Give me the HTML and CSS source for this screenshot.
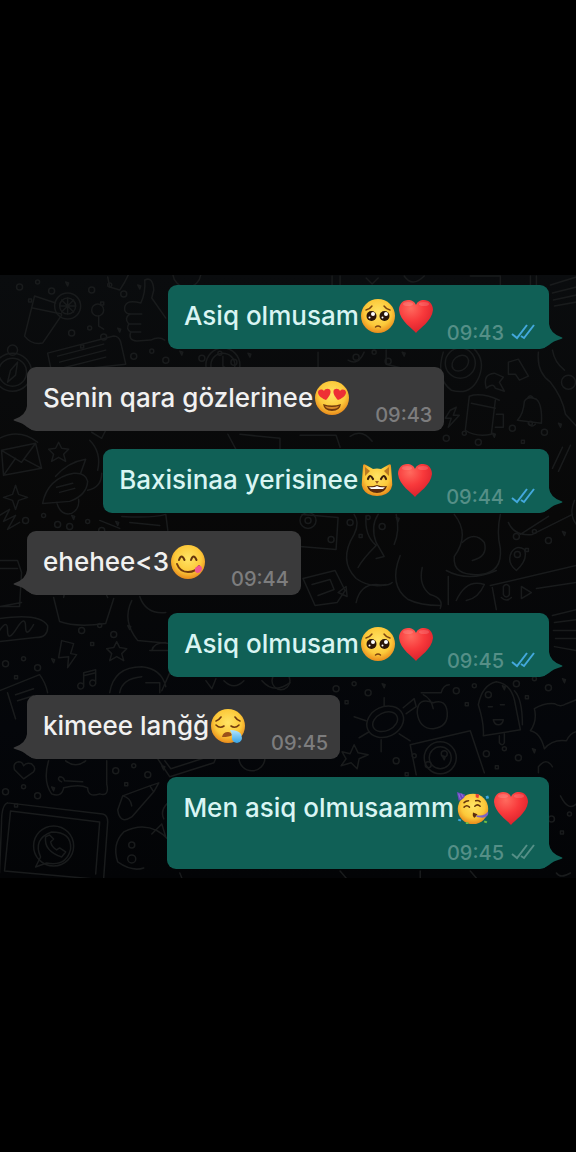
FILE: index.html
```html
<!DOCTYPE html>
<html lang="az">
<head>
    <meta charset="UTF-8">
    <meta name="viewport" content="width=device-width, initial-scale=1">
    <title>Chat</title>
    <link rel="stylesheet" href="styles.css">
</head>
<body>
    <!-- shared icons -->
    <svg class="sprite" aria-hidden="true">
        <defs>
            <radialGradient id="face" cx="50%" cy="40%" r="60%">
                <stop offset="0" stop-color="#ffe465"/>
                <stop offset=".65" stop-color="#fcc93a"/>
                <stop offset="1" stop-color="#e98b1c"/>
            </radialGradient>
            <radialGradient id="red" cx="35%" cy="25%" r="80%">
                <stop offset="0" stop-color="#ff6a5e"/>
                <stop offset=".5" stop-color="#f8393b"/>
                <stop offset="1" stop-color="#d81f2b"/>
            </radialGradient>
            <linearGradient id="drop" x1="0" y1="0" x2="0" y2="1">
                <stop offset="0" stop-color="#b4e6ff"/>
                <stop offset="1" stop-color="#35a3e6"/>
            </linearGradient>
        </defs>

        <symbol id="heart" viewBox="0 0 34 34">
            <path fill="url(#red)" d="M17 34C14 30 1 22 0 11C0 5 4 1 9 1c4 0 7 2 8 5c1-3 4-5 8-5c5 0 9 4 9 10c-1 11-14 19-17 23z"/>
            <ellipse cx="9" cy="5" rx="5" ry="2" fill="#fff" opacity=".15"/>
            <ellipse cx="25" cy="5" rx="5" ry="2" fill="#fff" opacity=".15"/>
        </symbol>

        <symbol id="pleading" viewBox="0 0 34 34">
            <circle cx="17" cy="17" r="17" fill="url(#face)"/>
            <g fill="#2a1508">
                <circle cx="10.500" cy="17" r="5"/>
                <circle cx="23.500" cy="17" r="5"/>
            </g>
            <g fill="#fff">
                <circle cx="12" cy="15" r="2"/>
                <circle cx="25" cy="15" r="2"/>
                <circle cx="8.500" cy="18.500" r="1"/>
                <circle cx="21.500" cy="18.500" r="1"/>
            </g>
            <path d="M5 11q4-1 6-4M29 11q-4-1-6-4M14.500 28q2.500-2 5 0" fill="none" stroke="#7a4310" stroke-width="1.400" stroke-linecap="round"/>
        </symbol>

        <symbol id="heart-eyes" viewBox="0 0 34 34">
            <circle cx="17" cy="17" r="17" fill="url(#face)"/>
            <path fill="#ee2f35" d="M11 19C8 18 3 15 3 11.500c0-3 4-4 6-1.500c1-3 6-3 6.500 0c.5 3-2.500 7-4.500 9zM23 19c3-1 8-4 8-7.500c0-3-4-4-6-1.500c-1-3-6-3-6.500 0c-.5 3 2.500 7 4.500 9z"/>
            <path fill="#71390e" d="M8 23q9 3 18 0q-1 7-9 7t-9-7z"/>
            <path fill="#d88a2a" d="M10 25q7 2 14 0q-1 3-7 3t-7-3z"/>
        </symbol>

        <symbol id="cat" viewBox="0 0 34 34">
            <path fill="url(#face)" d="M3 3q0-3 3-1l7 4q4-1 8 0l7-4q3-2 3 1l1 14q1 5-1 9q-4 7-14 7T3 26q-2-4-1-9z"/>
            <path fill="#b97822" d="M5 4l5 4l-5 5zM29 4l-5 4l5 5z"/>
            <path d="M8 16q2-6 5 0M21 16q3-6 5 0" fill="none" stroke="#3a1d0b" stroke-width="2.200" stroke-linecap="round"/>
            <path fill="#9b5a1a" d="M15 18h4l-2 3z"/>
            <path fill="#5a2a0d" d="M7 23q5 1 10-1q5 2 10 1q-2 7-10 7T7 23z"/>
            <path fill="#fff" d="M9 24q5 1 8-1q3 2 8 1l-2 2h-12z"/>
        </symbol>

        <symbol id="yum" viewBox="0 0 34 34">
            <circle cx="17" cy="17" r="17" fill="url(#face)"/>
            <path d="M8 15q2.500-7 5.500 0M20 15q2.500-7 5.500 0" fill="none" stroke="#65350d" stroke-width="2" stroke-linecap="round"/>
            <path d="M6 19q3 8 11 8q8 0 11-6" fill="none" stroke="#71390e" stroke-width="2" stroke-linecap="round"/>
            <path fill="#f0588f" d="M24 23l4-3q3 1 3 4q-1 4-5 4q-3-1-2-5z"/>
        </symbol>

        <symbol id="sleepy" viewBox="0 0 34 34">
            <circle cx="17" cy="17" r="17" fill="url(#face)"/>
            <path d="M5 16q4 4 8 1M20 17q4 3 8-1M5 12q3-1 5-4M29 12q-3-1-5-4" fill="none" stroke="#71390e" stroke-width="1.600" stroke-linecap="round"/>
            <path fill="#9b5119" d="M11 28q1-5 6-5q3 0 4 3q-2 2-10 2z"/>
            <path fill="url(#drop)" d="M19 21q8 0 11 4q3 8-4 9q-6-1-5-7q0-3-2-6z"/>
        </symbol>

        <symbol id="party" viewBox="0 0 36 38">
            <circle cx="18" cy="20" r="17" fill="url(#face)"/>
            <path fill="#6a48bd" d="M0 1l9 3q0 5-7 7z"/>
            <path d="M2 3l2 6M5 3l2 4" stroke="#9a76dd" stroke-width="1"/>
            <path d="M8 18q3-3 6 0M20 17q3-3 6 0M8 13q2-2 5-2M21 11q3-1 5 1" fill="none" stroke="#65350d" stroke-width="1.700" stroke-linecap="round"/>
            <path fill="#5a2a0d" d="M18 24l5 2l-3 4q-3-1-2-6z"/>
            <path d="M22 27q8 2 13-4q1 6-6 7l-7-1z" fill="#7b62c4"/>
            <path fill="#e64238" d="M21 3l4 1l-1 4l-3-1z"/>
            <path fill="#3da5de" d="M32 6l3-1l1 3l-3 1zM2 31l3 1l-1 2l-3-1z"/>
            <path fill="#6fbf45" d="M10 35h3v2h-3zM31 33l3 1l-1 2l-3-1z"/>
        </symbol>

        <symbol id="ticks" viewBox="0 0 24 18">
            <path d="M1 10l5 4L16 1M10 12l3 2L23 1" fill="none" stroke="currentColor" stroke-width="2"/>
        </symbol>

        <symbol id="tail" viewBox="0 0 20 24">
            <path fill="currentColor" d="M0 0H5Q6 9 17 13Q20 14 17 15Q9 17 5 21L0 24z"/>
        </symbol>
    </svg>

    <main class="chat">
        <!-- wallpaper doodles -->
        <svg class="wallpaper" viewBox="0 275 576 602" preserveAspectRatio="xMidYMin slice" aria-hidden="true">
            <defs>
                <g id="bits">
                    <circle cx="6" cy="8" r="3"/><circle cx="24" cy="3" r="2"/><circle cx="38" cy="12" r="3"/>
                    <path d="M52 3l3 1l-1 3zM15 20h3v3h-3z"/>
                </g>
                <path id="star" d="M0-10l3 6l7 1l-5 5l2 7l-7-4l-7 4l2-7l-5-5l7-1z"/>
                <path id="note" d="M-6 7V-7L6-10V4M-6 7a3 3 0 1 1-1-3M6 4a3 3 0 1 1-1-3M-6-4L6-7"/>
            </defs>

            <!-- scattered bits -->
            <use href="#bits" x="14" y="279"/><use href="#bits" x="86" y="282"/>
            <use href="#bits" x="66" y="325"/><use href="#bits" x="128" y="348"/>
            <use href="#bits" x="196" y="350"/><use href="#bits" x="350" y="349"/>
            <use href="#bits" x="440" y="430"/><use href="#bits" x="506" y="420"/>
            <use href="#bits" x="20" y="512"/><use href="#bits" x="64" y="518"/>
            <use href="#bits" x="344" y="514"/><use href="#bits" x="510" y="528"/>
            <use href="#bits" x="0" y="655"/><use href="#bits" x="76" y="622"/>
            <use href="#bits" x="330" y="680"/><use href="#bits" x="450" y="682"/>
            <use href="#bits" x="510" y="675"/><use href="#bits" x="390" y="752"/>
            <use href="#bits" x="480" y="745"/><use href="#bits" x="0" y="783"/>
            <use href="#bits" x="110" y="762"/><use href="#bits" x="545" y="810"/>

            <!-- drink with a slice -->
            <path d="M35 296L25 336Q32 345 43 343L62 315M35 296L56 303M33 308L62 314"/>
            <circle cx="68" cy="306" r="13"/><circle cx="68" cy="306" r="8"/>
            <path d="M60 306h16M68 298v16M62 300l12 12M74 300l-12 12"/>
            <circle cx="98" cy="310" r="6"/><path d="M99 316v10l5 3"/>
            <!-- thumb up -->
            <path d="M141 303q5-10 4-23q8-4 9 10l-2 8l14 20M141 303q-14-4-16 4q-1 6 5 7q-6 4-1 10q-3 5 2 8q-3 8 6 9l14-1q8-4 14 0"/>
            <path d="M130 314h12M129 324h12M131 332h10"/>
            <!-- note card -->
            <path d="M48 353l66-17q5 0 7 6l5 22l-74 8zM58 356l46-12M60 362l46-12M62 368l44-11"/>
            <!-- compass -->
            <circle cx="13" cy="372" r="19"/><circle cx="13" cy="372" r="14"/><circle cx="13" cy="350" r="5"/>
            <path d="M18 362l-2 13l-8 7l3-12z"/>
            <circle cx="223" cy="365" r="17"/><circle cx="223" cy="365" r="12"/><path d="M223 356v10l5 3"/>
            <circle cx="187" cy="273" r="14"/><path d="M108 277l2 10l10 3l5-8l4-8"/>

            <!-- strip above the first message -->
            <path d="M332 276v9M340 276v9M366 278l6 6l6-6M404 276q8 12 20 0M470 276h30v9M530 276v9M536 276v9M550 285l26-8M552 293l24-6M553 300l23-5M554 306l22-4"/>
            <!-- doughnut, boots, bell, mug -->
            <path d="M443 352q-8 26 8 38q20 6 28-14q6-16-5-27"/><ellipse cx="460" cy="363" rx="9" ry="7" transform="rotate(-40 460 363)"/>
            <circle cx="460" cy="363" r="15"/>
            <path d="M486 388q-4-14 8-15l9 4l-4 5l5 9l-9-3q-2-6-9 0zM508 362l10-3l10 17l-9 4l-4-6l-7 0z"/>
            <path d="M469 396l-4 34q10 7 26 4l4-34M469 396q12-4 30 4M471 403l24 5M496 414h7v13h-8"/>
            <path d="M517 420q6-6 7-19q4-6 12-2q6 5 5 24zM528 423q3 5 7 1M527 398q3-5 6 0"/>
            <path d="M538 352q-2 20 12 30q12 15 15 32l11 12M552 350q2 12 12 20"/><circle cx="568" cy="382" r="7"/>
            <path d="M450 410l-5 8h6l-3 9l11-12h-6l3-8z"/>
            <path d="M318 352v16M364 352q-6 14-16 8M386 350v14l16 4"/>
            <path d="M0 438q20-10 38 4M92 432l10 6l4-8M228 434l8 15M240 434l40 4v11M300 435h36l4 12M350 436q12-8 22 5"/>

            <!-- envelope, rocket, sparkles -->
            <path d="M2 450l34-7l6 25l-38 7zM2 450l20 12l14-19M4 475l12-17M42 468l-17-9"/>
            <use href="#star" x="59" y="452"/>
            <path d="M43 503q5-25 31-30q12-1 14 8q-1 14-18 20zM56 476q12-14 30-17l-5 14M57 502q4 14 15 11q8-4 7-14M57 487l16-4M60 492l15-4"/>
            <path d="M88 490q14-3 14-17M90 440q12 12 8 30"/>
            <path d="M16 485l3 9l9 3l-9 3l-3 9l-3-9l-9-3l9-3z"/>
            <path d="M0 515l10-6l-6 12l12-6l-8 14l12-7"/>
            <path d="M100 520l20 8M122 516q30 2 44-2l2 16M130 522l30 3"/>
            <path d="M0 560h18l4 12l-2 34H0M0 568h18M0 606l22-4"/>

            <!-- radio, cat and snake next to the short message -->
            <path d="M302 514l36 3l-2 32l-36-3"/><circle cx="308" cy="520" r="8"/><circle cx="308" cy="520" r="3"/><circle cx="331" cy="539" r="3"/>
            <path d="M354 514q6 8 0 20q-16 26 2 44q14 10 30 6M366 515q-2 20 10 30q-14 14-18 22M378 514q-8 12-2 28l8 14l-8 2M396 514q4 16-2 30"/>
            <path d="M400 555q-12 30 8 44q12 6 32 6M422 567q-4 18 8 27q14 4 10 14M454 514q16 20 0 42q-2 20 26 18q22-2 20-26q-4-16 0-34"/>
            <path d="M446 570q22 12 50 0M448 576v28M456 600q10-22 28-16q-6 14-18 16M462 542q12-12 22 0q4 14-12 18"/>
            <path d="M508 522q6 14 24 12l40-20M520 534l28-18"/>
            <path d="M516 570q-10-8-5-18q5-8 13-3q4 10-8 21z"/><circle cx="517" cy="554" r="3"/>
            <path d="M490 585l86-20M492 587l4 22M503 586q3-4 6 0v8q-3 5-6 0zM501 597q5 5 10 0M521 586v12l10-6zM536 588l40-6"/>
            <path d="M303 578l32-8l10 20l-8 12l-22 3zM312 584l18-5l4 10l-16 6M338 592l8-6l1 10z"/>
            <path d="M356 602q4-18 20-18q12 2 16-2M552 468l10-21M558 471l12-26"/>
            <path d="M574 500q-6 14 2 24"/>

            <!-- burger, backpack, bird -->
            <path d="M0 618q40-6 48 7q1 12-12 12l-36 4M0 630q8-12 8 0t9-2t9-2t8-2"/>
            <path d="M54 597l6 24q16 6 46 2l8-25M64 597q0-8 10-8M108 597q-2-6-8-6M132 600q-10 20 6 40l32 3M140 596q6 18 26 16M150 650h18M152 650q2-8 14-8"/>
            <path d="M62 640l12 3l-3 10l6 1l-9 13l1-11l-10 1z"/><use href="#star" x="117" y="651"/><use href="#note" x="90" y="679"/>
            <path d="M0 690l40-16q6 8 8 18M8 692l8 26M16 694l18-6M18 700l16-5"/>
            <path d="M110 692q4-26 32-26q20 2 24 20M120 692q2-14 22-16M146 682h14v10M162 690l8-18M206 680l6 8l4-10"/>
            <path d="M224 680q10 10 20 0M262 680q12 14 28 2"/><circle cx="281" cy="680" r="9"/>

            <!-- turtle, apple, ice cream, bat -->
            <ellipse cx="385" cy="721" rx="19" ry="15" transform="rotate(-25 385 721)"/><ellipse cx="385" cy="721" rx="13" ry="9" transform="rotate(-25 385 721)"/>
            <path d="M384 697v8M403 707l11-9l2 8l-10 7M366 720l-12-4M369 731l-10 6M381 739v12M399 733l11 7"/>
            <path d="M433 702q-16-6-16 10q2 16 16 16q15-2 14-16q-1-14-14-10zM433 708q-2-10-10-14M421 692h20q2-8 8-8"/>
            <path d="M478 704q4-20 18-23q14 2 18 18l6 30l-37 6q1-12-5-31zM514 690q8 8 8 34M499 735v7q3 4 5 0v-9M493 719h10q-1 5-5 5t-5-5M488 706h4M500 704h4"/>
            <path d="M534 708q10-6 20-5q6 4 12 0l10-4M534 708q3 12-4 22q10 2 14 18q8-10 22-8q4-8 10-9"/>
            <path d="M410 744l60-14l14 42M410 744l6 30"/><circle cx="440" cy="757" r="16"/><circle cx="440" cy="757" r="11"/><circle cx="444" cy="753" r="3"/>
            <path d="M342 751l8 2l4-9l4 8l10 2l-9 4l-2 10l-6-6l-10 3l5-7z"/>
            <path d="M552 615l24-6M554 622l22-3M553 630h23M555 638h21M554 646l22 4"/>

            <!-- puppy, crayon, laptop -->
            <path d="M24 778l-9-9q-2-7 4-8q4 0 5 4q3-4 8-2q5 4 2 8z"/>
            <path d="M49 760q-6 20 3 33q10 4 12-6q16-4 24 0q0 10 12 6q10 3 7-10V760M62 781q-5-2-2-5q4 0 5 4l18 1M66 760q10 8 20 0"/>
            <path d="M118 809l5-14l27-10l9-3l-5 9l-22 25q-12 8-14-7zM123 795q8 2 9 10M150 785l4 6"/>
            <path d="M158 758l12 18l44-14l4-9M165 760l6 8l34-11"/><circle cx="252" cy="757" r="13"/>
            <path d="M8 802l95 11q5 1 5 8l-4 56M8 802q-6 2-6 20l-2 50M11 810l89 11l-4 52M11 810L5 870l90 8"/>
            <circle cx="54" cy="845" r="20"/><path d="M36 866l5-10q-8-18 11-25q20 0 19 17q-4 18-24 14zM46 836q-2 14 16 20l4-5l-6-4l-3 2q-5-3-6-8l3-3l-4-4z"/>
            <!-- ghost -->
            <path d="M170 840q-20-22-46-9q-12 12-6 30q14 10 26 6M152 833l10-10l4 13"/><circle cx="132" cy="844" r="3"/><circle cx="132" cy="858" r="4"/>
            <path d="M168 802q-8 8-4 16M180 872l2 5M340 870l6 7M420 870v7M470 870l6 7M552 766q-6-10-14 0v6M560 795q8 16 16 8M556 872q4 6 14 0"/>
        </svg>

        <div class="msg msg-out">
            <p class="text">Asiq olmusam<svg class="emoji" role="img" aria-label="🥺"><use href="#pleading"/></svg><svg class="emoji" role="img" aria-label="❤️"><use href="#heart"/></svg></p>
            <div class="meta"><time>09:43</time><svg class="ticks read"><use href="#ticks"/></svg></div>
            <svg class="tail"><use href="#tail"/></svg>
        </div>

        <div class="msg msg-in">
            <p class="text">Senin qara gözlerinee<svg class="emoji" role="img" aria-label="😍"><use href="#heart-eyes"/></svg></p>
            <div class="meta"><time>09:43</time></div>
            <svg class="tail"><use href="#tail"/></svg>
        </div>

        <div class="msg msg-out">
            <p class="text">Baxisinaa yerisinee<svg class="emoji" role="img" aria-label="😸"><use href="#cat"/></svg><svg class="emoji" role="img" aria-label="❤️"><use href="#heart"/></svg></p>
            <div class="meta"><time>09:44</time><svg class="ticks read"><use href="#ticks"/></svg></div>
            <svg class="tail"><use href="#tail"/></svg>
        </div>

        <div class="msg msg-in">
            <p class="text">ehehee&lt;3<svg class="emoji" role="img" aria-label="😋"><use href="#yum"/></svg></p>
            <div class="meta"><time>09:44</time></div>
            <svg class="tail"><use href="#tail"/></svg>
        </div>

        <div class="msg msg-out">
            <p class="text">Asiq olmusam<svg class="emoji" role="img" aria-label="🥺"><use href="#pleading"/></svg><svg class="emoji" role="img" aria-label="❤️"><use href="#heart"/></svg></p>
            <div class="meta"><time>09:45</time><svg class="ticks read"><use href="#ticks"/></svg></div>
            <svg class="tail"><use href="#tail"/></svg>
        </div>

        <div class="msg msg-in">
            <p class="text">kimeee lanğğ<svg class="emoji" role="img" aria-label="😪"><use href="#sleepy"/></svg></p>
            <div class="meta"><time>09:45</time></div>
            <svg class="tail"><use href="#tail"/></svg>
        </div>

        <div class="msg msg-out msg-long">
            <p class="text">Men asiq olmusaamm<svg class="emoji" role="img" aria-label="🥳"><use href="#party"/></svg><svg class="emoji" role="img" aria-label="❤️"><use href="#heart"/></svg></p>
            <div class="meta"><time>09:45</time><svg class="ticks"><use href="#ticks"/></svg></div>
            <svg class="tail"><use href="#tail"/></svg>
        </div>
    </main>
</body>
</html>
```
FILE: styles.css
```css
*{
    box-sizing: border-box;
}

body{
    display: flex;
    flex-direction: column;
    justify-content: center;
    min-height: 100vh;
    margin: 0;
    background: #000;
    font-family: Inter, "Liberation Sans", sans-serif;
    font-weight: 450;
}

.sprite{
    position: absolute;
    width: 0;
    height: 0;
}

.chat{
    position: relative;
    display: flex;
    flex-direction: column;
    gap: 18px;
    padding: 10px 27px 9px;
    overflow: hidden;
    background: linear-gradient(#0a0c0e, #080808 40%, #04060a 75%, #030406);
}

.wallpaper{
    position: absolute;
    top: 0;
    left: 0;
    width: 100%;
    height: 100%;
    fill: none;
    stroke: #191b1c;
    stroke-width: 1.5;
    stroke-linecap: round;
    stroke-linejoin: round;
}

/* message */
.msg{
    position: relative;
    display: flex;
    align-items: flex-end;
    padding: 14px 14px 6px 16px;
    border-radius: 9px;
}

.msg-out{
    align-self: flex-end;
    gap: 14px;
    background: #106056;
    color: #106056;
}

.msg-in{
    align-self: flex-start;
    gap: 26px;
    padding-right: 12px;
    background: #3a3a3b;
    color: #3a3a3b;
}

.msg-long{
    flex-direction: column;
    gap: 8px;
}

.text{
    display: flex;
    align-items: center;
    gap: 2px;
    margin: 0;
    padding-bottom: 10px;
    font-size: 26px;
    line-height: 34px;
    color: #f1f1f1;
}

.msg-out .text{
    color: #d9f5f3;
}

.msg-long .text{
    padding-right: 7px;
}

.emoji{
    flex: none;
    width: 34px;
    height: 34px;
}

.emoji + .emoji{
    margin-left: 2px;
}

.meta{
    display: flex;
    align-items: center;
    gap: 7px;
    font-size: 20px;
    line-height: 20px;
    color: #7d7d7e;
}

.msg-out .meta{
    color: #558f87;
}

.ticks{
    width: 24px;
    height: 18px;
}

.msg-out .read{
    color: #43a8dc;
}

.tail{
    position: absolute;
    right: -15px;
    bottom: 1px;
    width: 20px;
    height: 24px;
}

.msg-in .tail{
    right: auto;
    left: -15px;
    transform: scaleX(-1);
}
```
